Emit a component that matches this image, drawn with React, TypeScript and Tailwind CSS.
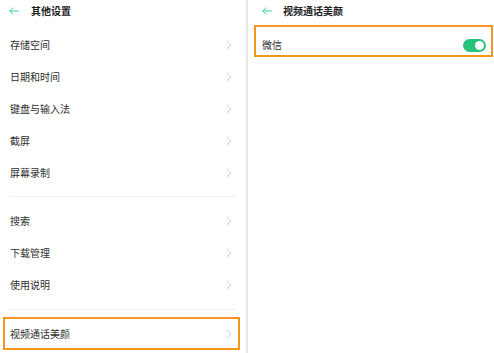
import React from "react";

const font = { fontFamily: '"Noto Sans CJK SC", "Noto Sans", sans-serif' };

function BackArrow() {
  return (
    <svg width="10" height="8" viewBox="0 0 10 8" fill="none" stroke="#3dd39a" strokeWidth="1" strokeLinecap="round" strokeLinejoin="round">
      <path d="M9.5 4H0.8M4 0.8L0.8 4L4 7.2" />
    </svg>
  );
}

function Chevron() {
  return (
    <svg width="6" height="10" viewBox="0 0 6 10" fill="none" stroke="#c9c9c9" strokeWidth="0.9" strokeLinecap="round" strokeLinejoin="round">
      <path d="M1 1L5 5L1 9" />
    </svg>
  );
}

function Row({ label, highlight }: { label: string; highlight?: boolean }) {
  return (
    <div className="relative flex h-[32px] items-center justify-between pl-[10px] pr-[14px]">
      <span className="text-[10px] leading-none text-[#2e2e2e]">{label}</span>
      <Chevron />
      {highlight && (
        <div className="pointer-events-none absolute top-[-1px] bottom-[0px] left-[3px] right-[6px] border-2 border-solid border-[#f7941e]" />
      )}
    </div>
  );
}

function Divider() {
  return <div className="mx-[10px] h-px bg-[#f0f0f0]" />;
}

export default function App() {
  return (
    <div className="flex h-[353px] w-[494px] overflow-hidden bg-white" style={font}>
      <div className="flex w-[246px] flex-col">
        <div className="flex h-[21px] items-center pl-[9px]">
          <BackArrow />
          <span className="ml-[12px] text-[10px] font-semibold leading-none text-[#222]">其他设置</span>
        </div>
        <div className="pt-[8px]">
          <Row label="存储空间" />
          <Row label="日期和时间" />
          <Row label="键盘与输入法" />
          <Row label="截屏" />
          <Row label="屏幕录制" />
          <div className="pb-[8px] pt-[7px]">
            <Divider />
          </div>
          <Row label="搜索" />
          <Row label="下载管理" />
          <Row label="使用说明" />
          <div className="py-[8px]">
            <Divider />
          </div>
          <Row label="视频通话美颜" highlight />
        </div>
      </div>
      <div className="w-[2px] bg-[#e6e6e6]" />
      <div className="flex flex-1 flex-col">
        <div className="flex h-[21px] items-center pl-[14px]">
          <BackArrow />
          <span className="ml-[11px] text-[10px] font-semibold leading-none text-[#222]">视频通话美颜</span>
        </div>
        <div className="pt-[8px]">
          <div className="relative flex h-[32px] items-center justify-between pl-[14px] pr-[8px]">
            <span className="text-[10px] leading-none text-[#2e2e2e]">微信</span>
            <div className="flex h-[13px] w-[23px] items-center justify-end rounded-full bg-[#27c27c] pr-[2px]">
              <div className="h-[9px] w-[9px] rounded-full bg-white" />
            </div>
            <div className="pointer-events-none absolute top-[-4px] bottom-[4px] left-[6px] right-[1px] border-2 border-solid border-[#f7941e]" />
          </div>
        </div>
      </div>
    </div>
  );
}
